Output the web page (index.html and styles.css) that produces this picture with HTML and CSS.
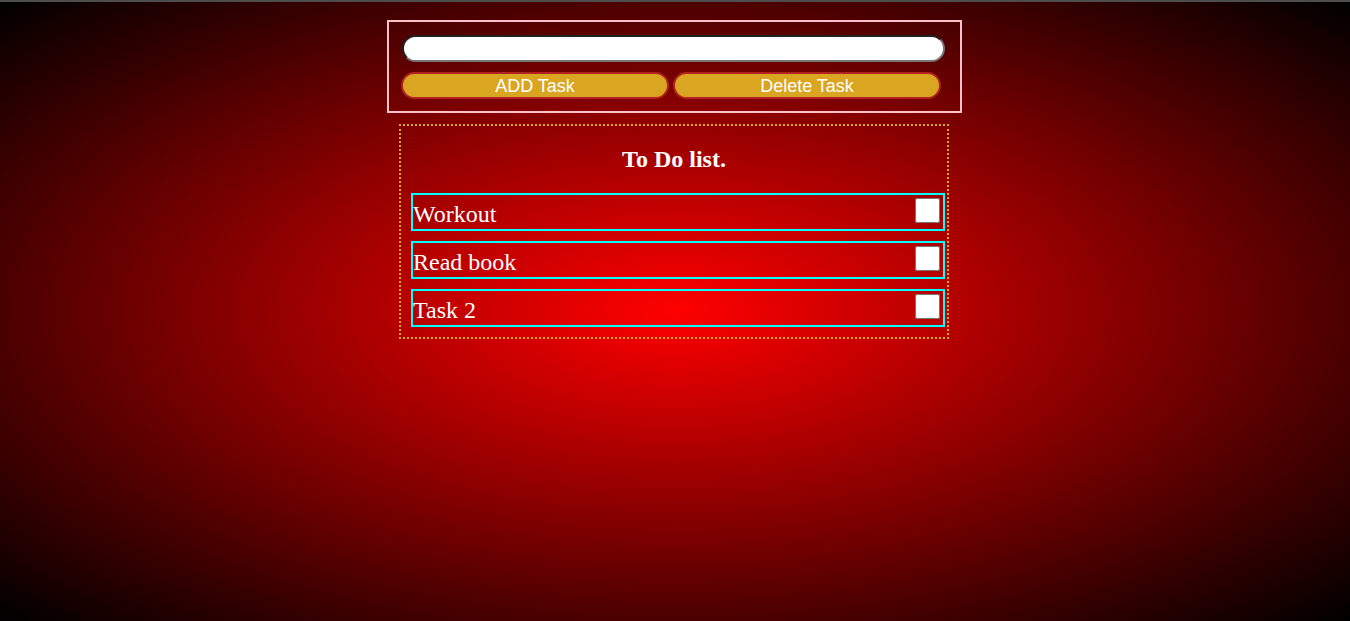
FILE: index.html
```html
<!DOCTYPE html>
<html lang="en">
<head>
<meta charset="utf-8">
<title>To Do list</title>
<link rel="stylesheet" href="styles.css">
</head>
<body>
<div class="topline"></div>
<main class="app">
  <form class="entry">
    <input class="task-input" type="text">
    <div class="actions">
      <button type="button" class="btn">ADD Task</button>
      <button type="button" class="btn">Delete Task</button>
    </div>
  </form>
  <section class="list">
    <h2 class="list-title">To Do list.</h2>
    <ul class="items">
      <li class="item"><span class="item-text">Workout</span><input class="check" type="checkbox"></li>
      <li class="item"><span class="item-text">Read book</span><input class="check" type="checkbox"></li>
      <li class="item"><span class="item-text">Task 2</span><input class="check" type="checkbox"></li>
    </ul>
  </section>
</main>
</body>
</html>
```

FILE: styles.css
```css
html {
  min-height: 100%;
  background: radial-gradient(#ff0000, #000000);
}

body {
  margin: 0;
  font-family: "Liberation Serif", "Times New Roman", serif;
}

.topline {
  height: 2px;
  background: #4d4d4d;
}

.app {
  display: flex;
  flex-direction: column;
  align-items: center;
  padding-top: 18px;
}

.entry {
  box-sizing: border-box;
  width: 575px;
  border: 2px solid #ffc0cb;
  padding: 13px 12px 12px 12px;
  margin: 0 1px 0 0;
}

.task-input {
  display: block;
  box-sizing: border-box;
  width: 543px;
  height: 27px;
  margin: 0 0 0 1px;
  border: 2px inset #767676;
  border-radius: 14px;
  background: #ffffff;
}

.actions {
  display: flex;
  gap: 4px;
  margin-top: 10px;
}

.btn {
  box-sizing: border-box;
  width: 268px;
  height: 27px;
  margin: 0;
  padding: 1px 0 0;
  border: 2px solid #b22222;
  border-radius: 14px;
  background: #daa520;
  color: #ffffff;
  font-family: "Liberation Sans", Arial, sans-serif;
  font-size: 18px;
  line-height: 21px;
}

.list {
  box-sizing: border-box;
  width: 550px;
  margin: 11px 2px 0 0;
  border: 2px dotted #daa520;
  padding: 0 2px 10px 10px;
}

.list-title {
  margin: 19px 0 20px -8px;
  font-size: 24px;
  line-height: 28px;
  font-weight: bold;
  text-align: center;
  color: #ffffff;
}

.items {
  list-style: none;
  margin: 0;
  padding: 0;
  display: flex;
  flex-direction: column;
  gap: 10px;
}

.item {
  box-sizing: border-box;
  width: 534px;
  height: 38px;
  border: 2px solid #00ffff;
  display: flex;
  justify-content: space-between;
  align-items: flex-start;
}

.item-text {
  margin-top: 7px;
  font-size: 24px;
  line-height: 24px;
  color: #ffffff;
}

.check {
  width: 25px;
  height: 25px;
  margin: 3px 3px 0 0;
}
```
